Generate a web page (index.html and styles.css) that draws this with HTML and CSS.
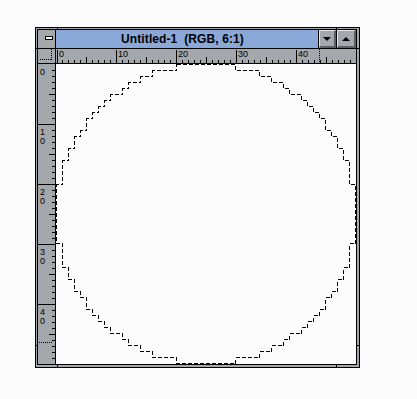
FILE: index.html
```html
<!DOCTYPE html>
<html>
<head>
<meta charset="utf-8">
<link rel="stylesheet" href="styles.css">
</head>
<body>
<div class="desk">
  <div class="window">
    <div class="inner">
      <div class="sysmenu"><span class="sysbar"></span></div>
      <div class="titlebar">
        <div class="title">Untitled-1&nbsp;&nbsp;(RGB, 6:1)</div>
        <div class="btn"><span class="tri-down"></span></div>
        <div class="btn btn-up"><span class="tri-up"></span></div>
      </div>
      <div class="corner">
        <svg width="17" height="14" class="rsvg">
          <path d="M2 10.5H14M13.5 0V11" class="dots"/>
        </svg>
      </div>
      <div class="hruler">
        <svg width="300" height="14" class="rsvg">
          <path class="tick" d="M1.5 1V14M60.5 1V14M120.5 1V14M180.5 1V14M240.5 1V14
            M30.5 8V14M90.5 8V14M150.5 8V14M210.5 8V14M270.5 8V14
            M6.5 11V14M12.5 11V14M18.5 11V14M24.5 11V14M36.5 11V14M42.5 11V14M48.5 11V14M54.5 11V14
            M66.5 11V14M72.5 11V14M78.5 11V14M84.5 11V14M96.5 11V14M102.5 11V14M108.5 11V14M114.5 11V14
            M126.5 11V14M132.5 11V14M138.5 11V14M144.5 11V14M156.5 11V14M162.5 11V14M168.5 11V14M174.5 11V14
            M186.5 11V14M192.5 11V14M198.5 11V14M204.5 11V14M216.5 11V14M222.5 11V14M228.5 11V14M234.5 11V14
            M246.5 11V14M252.5 11V14M258.5 11V14M264.5 11V14M276.5 11V14M282.5 11V14M288.5 11V14M294.5 11V14"/>
          <path class="dots" d="M263.5 0V14"/>
          <text x="3" y="8" class="lbl">0</text>
          <text x="62" y="8" class="lbl">10</text>
          <text x="122" y="8" class="lbl">20</text>
          <text x="182" y="8" class="lbl">30</text>
          <text x="242" y="8" class="lbl">40</text>
        </svg>
      </div>
      <div class="vruler">
        <svg width="17" height="300" class="rsvg">
          <path class="tick" d="M0 60.5H17M0 120.5H17M0 180.5H17M0 240.5H17
            M11 30.5H17M11 90.5H17M11 150.5H17M11 210.5H17M11 270.5H17
            M14 6.5H17M14 12.5H17M14 18.5H17M14 24.5H17M14 36.5H17M14 42.5H17M14 48.5H17M14 54.5H17
            M14 66.5H17M14 72.5H17M14 78.5H17M14 84.5H17M14 96.5H17M14 102.5H17M14 108.5H17M14 114.5H17
            M14 126.5H17M14 132.5H17M14 138.5H17M14 144.5H17M14 156.5H17M14 162.5H17M14 168.5H17M14 174.5H17
            M14 186.5H17M14 192.5H17M14 198.5H17M14 204.5H17M14 216.5H17M14 222.5H17M14 228.5H17M14 234.5H17
            M14 246.5H17M14 252.5H17M14 258.5H17M14 264.5H17M14 276.5H17M14 282.5H17M14 288.5H17M14 294.5H17"/>
          <path class="dots" d="M1 278.5H14"/>
          <text x="2" y="11" class="lbl">0</text>
          <text x="2" y="71" class="lbl">1</text><text x="2" y="80" class="lbl">0</text>
          <text x="2" y="131" class="lbl">2</text><text x="2" y="140" class="lbl">0</text>
          <text x="2" y="191" class="lbl">3</text><text x="2" y="200" class="lbl">0</text>
          <text x="2" y="251" class="lbl">4</text><text x="2" y="260" class="lbl">0</text>
        </svg>
      </div>
      <div class="canvas">
        <svg class="sel" width="300" height="300">
          <path transform="translate(0.5,0.5)" d="M120,0 H179 V6 H203 V12 H215 V18 H227 V24 H233 V30 H245 V36 H251 V42 H257 V48 H263 V54 H269 V66 H275 V72 H281 V84 H287 V96 H293 V120 H299 V179 H293 V203 H287 V215 H281 V227 H275 V233 H269 V245 H263 V251 H257 V257 H251 V263 H245 V269 H233 V275 H227 V281 H215 V287 H203 V293 H179 V299 H120 V293 H96 V287 H84 V281 H72 V275 H66 V269 H54 V263 H48 V257 H42 V251 H36 V245 H30 V233 H24 V227 H18 V215 H12 V203 H6 V179 H0 V120 H6 V96 H12 V84 H18 V72 H24 V66 H30 V54 H36 V48 H42 V42 H48 V36 H54 V30 H66 V24 H72 V18 H84 V12 H96 V6 H120 Z"/>
        </svg>
      </div>
    </div>
    <i class="mark mark-l mark-a"></i>
    <i class="mark mark-l mark-b"></i>
    <i class="mark mark-r mark-a"></i>
    <i class="mark mark-r mark-b"></i>
    <i class="mark mark-t mark-c"></i>
    <i class="mark mark-t mark-d"></i>
    <i class="mark mark-bt mark-c"></i>
    <i class="mark mark-bt mark-d"></i>
  </div>
</div>
</body>
</html>
```

FILE: styles.css
```css
body {
  margin: 0;
  background: #fcfcfc;
}

.desk {
  padding: 27px 0 0 35px;
}

.window {
  position: relative;
  width: 325px;
  box-sizing: border-box;
  border: 1px solid #000;
  background: #a4a8ac;
  padding: 1px 2px 2px 1px;
}

.inner {
  border: 1px solid #000;
  background: #000;
  display: grid;
  grid-template-columns: 17px 300px;
  grid-template-rows: 18px 14px 300px;
  gap: 1px;
}

.sysmenu {
  background: #a4a8ac;
  padding: 6px 0 0 7px;
  box-sizing: border-box;
}

.sysbar {
  display: block;
  width: 6px;
  height: 2px;
  background: #fff;
  border: 1px solid #000;
}

.titlebar {
  display: flex;
  gap: 1px;
  background: #000;
}

.title {
  flex: 1;
  background: #8aa8d8;
  font-family: "Liberation Sans", Arial, sans-serif;
  font-weight: bold;
  font-size: 12px;
  letter-spacing: 0.1px;
  line-height: 18px;
  color: #000;
  text-align: center;
  padding-right: 9px;
  white-space: nowrap;
}

.btn {
  width: 17px;
  box-sizing: border-box;
  background: #a4a8ac;
  border-top: 1px solid #e4e6e8;
  border-left: 1px solid #e4e6e8;
  border-right: 2px solid #5c6064;
  border-bottom: 2px solid #5c6064;
  display: flex;
  align-items: center;
  justify-content: center;
}

.btn-up {
  width: 19px;
}

.tri-down {
  width: 0;
  height: 0;
  border-left: 4px solid transparent;
  border-right: 4px solid transparent;
  border-top: 4px solid #000;
}

.tri-up {
  width: 0;
  height: 0;
  border-left: 4px solid transparent;
  border-right: 4px solid transparent;
  border-bottom: 4px solid #000;
}

.corner,
.hruler,
.vruler {
  background: #a4a8ac;
}

.rsvg {
  display: block;
}

.tick {
  stroke: #000;
  stroke-width: 1;
  fill: none;
  shape-rendering: crispEdges;
}

.dots {
  stroke: #000;
  stroke-width: 1;
  stroke-dasharray: 1 1;
  fill: none;
  shape-rendering: crispEdges;
}

.lbl {
  font-family: "Liberation Sans", Arial, sans-serif;
  font-size: 9px;
  fill: #000;
}

.canvas {
  position: relative;
  background: #fcfcfc;
}

.sel {
  position: absolute;
  left: 0;
  top: 0;
}

.sel path {
  fill: none;
  stroke: #000;
  stroke-width: 1;
  stroke-dasharray: 4 2;
  shape-rendering: crispEdges;
}

.mark {
  position: absolute;
  display: block;
  background: #000;
}

.mark-l { left: 0; width: 1px; height: 1px; }
.mark-r { left: 321px; width: 2px; height: 1px; }
.mark-a { top: 20px; }
.mark-b { top: 317px; }
.mark-t { top: 0; width: 1px; height: 1px; }
.mark-bt { top: 337px; width: 1px; height: 2px; }
.mark-c { left: 21px; }
.mark-d { left: 300px; }
```
